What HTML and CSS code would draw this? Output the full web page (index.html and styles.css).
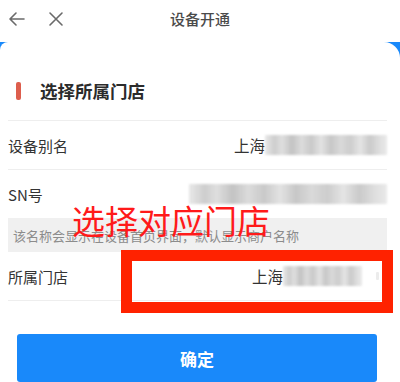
FILE: index.html
```html
<!DOCTYPE html>
<html lang="zh">
<head>
<meta charset="utf-8">
<title>设备开通</title>
<link rel="stylesheet" href="styles.css">
</head>
<body>
<div class="page">
  <header class="nav">
    <div class="nav-icons">
      <svg class="icon" width="18" height="16" viewBox="0 0 18 16"><path d="M16 8H2.5M8 2L2 8l6 6" fill="none" stroke="#6a6a6a" stroke-width="1.6" stroke-linecap="round" stroke-linejoin="round"/></svg>
      <svg class="icon" width="16" height="16" viewBox="0 0 16 16"><path d="M2 2l12 12M14 2L2 14" fill="none" stroke="#6a6a6a" stroke-width="1.6" stroke-linecap="round"/></svg>
    </div>
    <div class="nav-title">设备开通</div>
    <div class="nav-side"></div>
  </header>
  <div class="band">
    <main class="card">
      <div class="section-head">
        <span class="bar"></span>
        <span class="section-title">选择所属门店</span>
      </div>
      <div class="row bordered">
        <span class="label">设备别名</span>
        <span class="value">上海<span class="blur w122"></span></span>
      </div>
      <div class="row">
        <span class="label">SN号</span>
        <span class="value"><span class="blur w198"></span></span>
      </div>
      <div class="hint">该名称会显示在设备首页界面，默认显示商户名称</div>
      <div class="row bordered">
        <span class="label">所属门店</span>
        <span class="value store">上海<span class="blur w79"></span><span class="chev"></span></span>
      </div>
      <div class="actions">
        <button class="btn">确定</button>
      </div>
    </main>
  </div>
  <div class="note">选择对应门店</div>
  <div class="mark"></div>
</div>
</body>
</html>
```

FILE: styles.css
```css
* { box-sizing: border-box; }
html, body { margin: 0; padding: 0; background: #fff; }
body {
  font-family: "Noto Sans CJK SC", "Noto Sans", "Liberation Sans", sans-serif;
  color: #333;
  width: 400px;
  height: 382px;
  overflow: hidden;
}
.page { position: relative; width: 400px; height: 382px; overflow: hidden; }

.nav {
  height: 42px;
  display: grid;
  grid-template-columns: 1fr auto 1fr;
  align-items: start;
  padding-top: 9px;
  background: #fff;
}
.nav-icons { display: flex; align-items: center; gap: 22px; padding-left: 8px; height: 20px; }
.icon { display: block; }
.nav-title { font-size: 15px; line-height: 20px; color: #4a4a4a; font-weight: 500; }

.band { background: #1989fa; }
.card {
  background: #fff;
  border-radius: 8px 16px 0 0;
  padding: 0 13px 0 8px;
}
.section-head {
  display: flex;
  align-items: center;
  gap: 19px;
  padding: 37px 0 17px 8px;
  height: 79px;
  border-bottom: 1px solid #eeeeee;
}
.bar { width: 5px; height: 18px; border-radius: 2px; background: #dd5e4d; }
.section-title { font-size: 17.5px; font-weight: 700; color: #2b2b2b; line-height: 24px; }

.row {
  display: flex;
  align-items: center;
  justify-content: space-between;
  height: 48px;
}
.row.bordered { height: 49px; border-bottom: 1px solid #eeeeee; }
.label { font-size: 15px; color: #333; }
.value { display: flex; align-items: center; font-size: 15.5px; color: #333; }
.blur {
  display: inline-block;
  height: 20px;
  background:
    linear-gradient(90deg, #e6e6e6 0%, #c9c9c9 8%, #dcdcdc 14%, #bdbdbd 22%, #d8d8d8 30%, #c4c4c4 38%, #e0e0e0 46%, #c2c2c2 54%, #d6d6d6 62%, #c8c8c8 70%, #e2e2e2 78%, #c5c5c5 86%, #dcdcdc 94%, #e8e8e8 100%);
  filter: blur(1.2px);
  opacity: 0.9;
}
.w122 { width: 122px; }
.w198 { width: 198px; }
.w79 { width: 79px; }
.store { padding-right: 8px; }
.chev {
  width: 3px; height: 8px; margin-left: 14px;
  background: #ececec; border-radius: 1px;
}
.hint {
  height: 34px;
  display: flex;
  align-items: center;
  background: #f0f0f0;
  padding-left: 5px;
  font-size: 13px;
  color: #8c8c8c;
}
.actions { padding: 33px 10px 0 9px; }
.btn {
  display: block;
  width: 100%;
  height: 48px;
  border: 0;
  border-radius: 3px;
  background: #1989fa;
  color: #fff;
  font-family: inherit;
  font-size: 17px;
  font-weight: 700;
}

.note {
  position: absolute;
  left: 72px;
  top: 198px;
  font-size: 33px;
  line-height: 44px;
  color: #ff1a1a;
  font-weight: 400;
}
.mark {
  position: absolute;
  left: 121px;
  top: 250px;
  width: 272px;
  height: 63px;
  border: 11px solid #ff2200;
}
```
